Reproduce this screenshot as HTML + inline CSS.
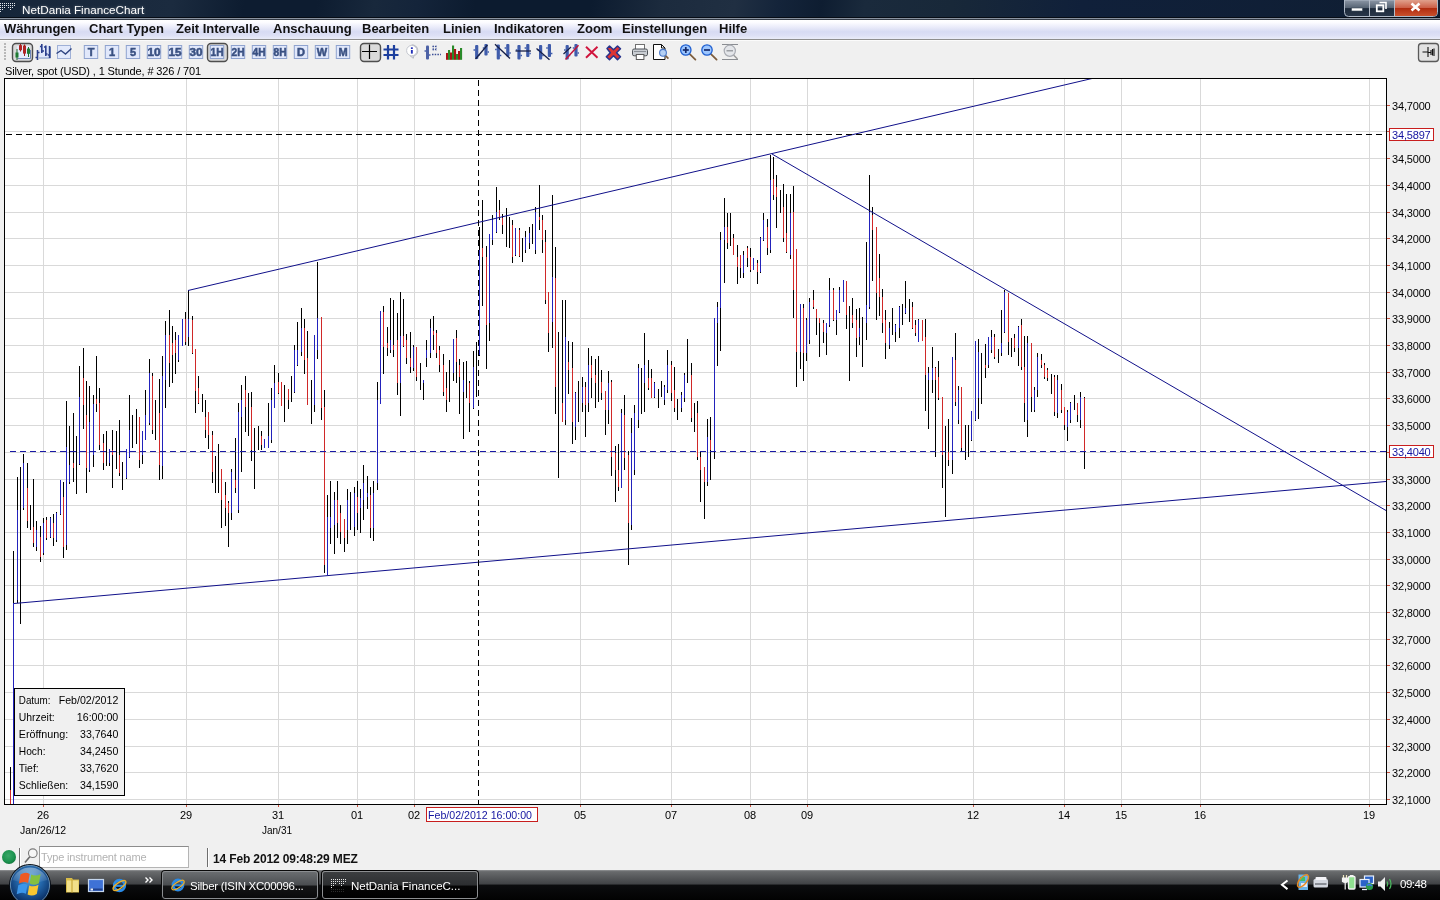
<!DOCTYPE html>
<html lang="de"><head><meta charset="utf-8"><title>NetDania FinanceChart</title>
<style>
html,body{margin:0;padding:0;}
body{will-change:transform;width:1440px;height:900px;overflow:hidden;position:relative;background:#f0f0f0;font-family:"Liberation Sans",Arial,sans-serif;font-size:11px;color:#000;}
.abs{position:absolute;}
#titlebar{left:0;top:0;width:1440px;height:17px;background:linear-gradient(100deg,#16263a 0%,#1b2b3f 12%,#0d1c30 17%,#0d1c30 22%,#18283c 26%,#14243a 29%,#0c1b2f 33%,#0c1b2f 41%,#1c2b3e 46%,#202f42 51%,#14243a 54%,#0e1d31 57%,#1a2a3c 60%,#182839 66%,#10203a 75%,#0f1e32 100%);}
#titlebar .t{position:absolute;left:22px;top:3px;color:#fff;font-size:11.7px;line-height:14px;letter-spacing:0;text-shadow:0 0 3px rgba(255,255,255,.35);}
#menubar{left:0;top:20px;width:1440px;height:19px;background:linear-gradient(180deg,#fff 0%,#fbfbff 14%,#e8eaf9 40%,#d7dbf3 62%,#dde0f5 82%,#eaecf9 100%);border-bottom:1px solid #8e8e8e;}
#menubar span{position:absolute;top:1px;font-weight:bold;font-size:13px;line-height:15px;color:#111;white-space:nowrap;}
#toolbar{left:0;top:40px;width:1440px;height:26px;background:#f0f0f0;border-top:1px solid #fbfbfb;box-sizing:border-box;}
#lbl{left:5px;top:65px;font-size:11px;line-height:13px;white-space:nowrap;letter-spacing:-0.14px;}
#status{left:0;top:845px;width:1440px;height:25px;background:#f0f0f0;}
#taskbar{left:0;top:870px;width:1440px;height:30px;background:linear-gradient(180deg,#97999b 0%,#6e7072 4%,#66686a 8%,#404245 47%,#0b0c0e 50%,#020202 100%);}
.tt{color:#fff;font-size:12px;line-height:14px;white-space:nowrap;}
</style></head><body>
<div id="titlebar" class="abs"><svg width="1440" height="20" viewBox="0 0 1440 20" style="position:absolute;left:0;top:0"><defs><linearGradient id="cbg" x1="0" y1="0" x2="0" y2="1"><stop offset="0" stop-color="#8c97a6"/><stop offset="0.48" stop-color="#566373"/><stop offset="0.52" stop-color="#1d2a3b"/><stop offset="1" stop-color="#2a3749"/></linearGradient><linearGradient id="cbr" x1="0" y1="0" x2="0" y2="1"><stop offset="0" stop-color="#e0a08c"/><stop offset="0.48" stop-color="#cc6048"/><stop offset="0.52" stop-color="#b02c10"/><stop offset="1" stop-color="#c8502c"/></linearGradient></defs><g fill="#e4e8ee"><rect x="0" y="3" width="1" height="1"/><rect x="2" y="3" width="1" height="1"/><rect x="4" y="3" width="1" height="1"/><rect x="6" y="3" width="1" height="1"/><rect x="8" y="3" width="1" height="1"/><rect x="10" y="3" width="1" height="1"/><rect x="12" y="3" width="1" height="1"/><rect x="14" y="3" width="1" height="1"/><rect x="0" y="5" width="1" height="1"/><rect x="2" y="5" width="1" height="1"/><rect x="4" y="5" width="1" height="1"/><rect x="6" y="5" width="1" height="1"/><rect x="8" y="5" width="1" height="1"/><rect x="10" y="5" width="1" height="1"/><rect x="12" y="5" width="1" height="1"/><rect x="14" y="5" width="1" height="1"/><rect x="0" y="7" width="1" height="1"/><rect x="2" y="7" width="1" height="1"/><rect x="4" y="7" width="1" height="1"/><rect x="8" y="7" width="1" height="1"/><rect x="10" y="7" width="1" height="1"/><rect x="12" y="7" width="1" height="1"/><rect x="0" y="9" width="1" height="1"/><rect x="2" y="9" width="1" height="1"/><rect x="10" y="9" width="1" height="1"/><rect x="0" y="11" width="1" height="1"/></g><path d="M1344.5 0V12.5Q1344.5 16.5 1348.5 16.5H1433.5Q1437.5 16.5 1437.5 12.5V0Z" fill="url(#cbg)" stroke="#aeb8c6" stroke-width="1"/><path d="M1395 0H1437V12.5Q1437 16 1433.5 16H1395Z" fill="url(#cbr)"/><path d="M1369.5 0V16M1394.5 0V16" stroke="#b4bcc8" stroke-width="1"/><rect x="1351.5" y="8" width="11" height="3" fill="#fff" stroke="#3a4656" stroke-width="0.6"/><path d="M1379.5 2.5H1386V9" fill="none" stroke="#fff" stroke-width="1.6"/><rect x="1376.8" y="5.3" width="6.5" height="6" fill="none" stroke="#fff" stroke-width="1.8"/><path d="M1411.5 3.5L1419.5 10.5M1419.5 3.5L1411.5 10.5" stroke="#fff" stroke-width="2.6"/></svg><span class="t">NetDania FinanceChart</span></div>
<div class="abs" style="left:0;top:17px;width:1440px;height:1px;background:#070d16"></div><div class="abs" style="left:0;top:18px;width:1440px;height:1px;background:#8a93a0"></div><div class="abs" style="left:0;top:19px;width:1440px;height:1px;background:#343c48"></div>
<div id="menubar" class="abs">
<span style="left:4px">Währungen</span><span style="left:89px">Chart Typen</span><span style="left:176px">Zeit Intervalle</span><span style="left:273px">Anschauung</span><span style="left:362px">Bearbeiten</span><span style="left:443px">Linien</span><span style="left:494px">Indikatoren</span><span style="left:577px">Zoom</span><span style="left:622px">Einstellungen</span><span style="left:719px">Hilfe</span>
</div>
<div id="toolbar" class="abs"></div>
<svg width="1440" height="26" viewBox="0 40 1440 26" style="position:absolute;left:0;top:40px" font-family="Liberation Sans, Arial, sans-serif"><rect x="4" y="43" width="2" height="2" fill="#b8b8b8"/><rect x="4" y="46" width="2" height="2" fill="#b8b8b8"/><rect x="4" y="49" width="2" height="2" fill="#b8b8b8"/><rect x="4" y="52" width="2" height="2" fill="#b8b8b8"/><rect x="4" y="55" width="2" height="2" fill="#b8b8b8"/><rect x="4" y="58" width="2" height="2" fill="#b8b8b8"/><rect x="12.5" y="43.5" width="20" height="18" rx="3.5" fill="#dadada" stroke="#4e4e4e" stroke-width="1.4"/><rect x="207.5" y="43.5" width="20" height="18" rx="3.5" fill="#dadada" stroke="#4e4e4e" stroke-width="1.4"/><rect x="360.5" y="43.5" width="20" height="18" rx="3.5" fill="#dadada" stroke="#4e4e4e" stroke-width="1.4"/><rect x="17" y="46" width="13" height="12" fill="#e4ebfb"/><path d="M17.5 58.5H30.5V50" fill="none" stroke="#6f86b8"/><g stroke-width="1"><path d="M17 49V60" stroke="#1d6b2c"/><path d="M20.5 44V51.5M24.5 44.5V56" stroke="#9c1c1c"/><path d="M28.5 47V57" stroke="#1d6b2c"/></g><rect x="15.5" y="52.5" width="3" height="5" fill="#1f7a33"/><rect x="19" y="45.2" width="3" height="5" fill="#b02424"/><rect x="23" y="45.6" width="3" height="8" fill="#b02424"/><rect x="27" y="48.6" width="3" height="5.2" fill="#1f7a33"/><rect x="39" y="45.5" width="11" height="12.5" fill="#dfe7fa"/><path d="M39 58H50.5V47" fill="none" stroke="#7f95c4"/><g stroke="#2b3f8c" stroke-width="1.6" fill="none"><path d="M37.5 50V60M35.5 57.5H37.5M37.5 52.5H39.5"/><path d="M41.8 44V53M40 46.5H41.8M41.8 51H44"/><path d="M45.8 45.5V56M44 47H45.8M45.8 54H47.5"/><path d="M49.6 46V58M47.8 55H49.6"/></g><rect x="57.5" y="45.5" width="13" height="13" fill="#e2e9fb" stroke="#9fb0d6"/><path d="M56.5 53.5L61 50.5L65.5 54L71.5 48.5" fill="none" stroke="#2f4480" stroke-width="1.4"/><rect x="84.3" y="45.5" width="13.4" height="13" fill="#e1e8fb" stroke="#8fa3cf" stroke-width="1"/><text x="91.0" y="56" text-anchor="middle" font-size="11" font-weight="bold" fill="#3a5182" stroke="#3a5182" stroke-width="0.5">T</text><rect x="105.3" y="45.5" width="13.4" height="13" fill="#e1e8fb" stroke="#8fa3cf" stroke-width="1"/><text x="112.0" y="56" text-anchor="middle" font-size="11" font-weight="bold" fill="#3a5182" stroke="#3a5182" stroke-width="0.5">1</text><rect x="126.3" y="45.5" width="13.4" height="13" fill="#e1e8fb" stroke="#8fa3cf" stroke-width="1"/><text x="133.0" y="56" text-anchor="middle" font-size="11" font-weight="bold" fill="#3a5182" stroke="#3a5182" stroke-width="0.5">5</text><rect x="147.3" y="45.5" width="13.4" height="13" fill="#e1e8fb" stroke="#8fa3cf" stroke-width="1"/><text x="154.0" y="56" text-anchor="middle" font-size="10.5" font-weight="bold" fill="#3a5182" stroke="#3a5182" stroke-width="0.5" textLength="13" lengthAdjust="spacingAndGlyphs">10</text><rect x="168.3" y="45.5" width="13.4" height="13" fill="#e1e8fb" stroke="#8fa3cf" stroke-width="1"/><text x="175.0" y="56" text-anchor="middle" font-size="10.5" font-weight="bold" fill="#3a5182" stroke="#3a5182" stroke-width="0.5" textLength="13" lengthAdjust="spacingAndGlyphs">15</text><rect x="189.3" y="45.5" width="13.4" height="13" fill="#e1e8fb" stroke="#8fa3cf" stroke-width="1"/><text x="196.0" y="56" text-anchor="middle" font-size="10.5" font-weight="bold" fill="#3a5182" stroke="#3a5182" stroke-width="0.5" textLength="13" lengthAdjust="spacingAndGlyphs">30</text><rect x="210.3" y="45.5" width="13.4" height="13" fill="#e1e8fb" stroke="#8fa3cf" stroke-width="1"/><text x="217.0" y="56" text-anchor="middle" font-size="10.5" font-weight="bold" fill="#3a5182" stroke="#3a5182" stroke-width="0.5" textLength="13" lengthAdjust="spacingAndGlyphs">1H</text><rect x="231.3" y="45.5" width="13.4" height="13" fill="#e1e8fb" stroke="#8fa3cf" stroke-width="1"/><text x="238.0" y="56" text-anchor="middle" font-size="10.5" font-weight="bold" fill="#3a5182" stroke="#3a5182" stroke-width="0.5" textLength="13" lengthAdjust="spacingAndGlyphs">2H</text><rect x="252.3" y="45.5" width="13.4" height="13" fill="#e1e8fb" stroke="#8fa3cf" stroke-width="1"/><text x="259.0" y="56" text-anchor="middle" font-size="10.5" font-weight="bold" fill="#3a5182" stroke="#3a5182" stroke-width="0.5" textLength="13" lengthAdjust="spacingAndGlyphs">4H</text><rect x="273.3" y="45.5" width="13.4" height="13" fill="#e1e8fb" stroke="#8fa3cf" stroke-width="1"/><text x="280.0" y="56" text-anchor="middle" font-size="10.5" font-weight="bold" fill="#3a5182" stroke="#3a5182" stroke-width="0.5" textLength="13" lengthAdjust="spacingAndGlyphs">8H</text><rect x="294.3" y="45.5" width="13.4" height="13" fill="#e1e8fb" stroke="#8fa3cf" stroke-width="1"/><text x="301.0" y="56" text-anchor="middle" font-size="11" font-weight="bold" fill="#3a5182" stroke="#3a5182" stroke-width="0.5">D</text><rect x="315.3" y="45.5" width="13.4" height="13" fill="#e1e8fb" stroke="#8fa3cf" stroke-width="1"/><text x="322.0" y="56" text-anchor="middle" font-size="11" font-weight="bold" fill="#3a5182" stroke="#3a5182" stroke-width="0.5">W</text><rect x="336.3" y="45.5" width="13.4" height="13" fill="#e1e8fb" stroke="#8fa3cf" stroke-width="1"/><text x="343.0" y="56" text-anchor="middle" font-size="11" font-weight="bold" fill="#3a5182" stroke="#3a5182" stroke-width="0.5">M</text><path d="M369.5 44.5V59M362 51.5H377" stroke="#000" stroke-width="1.2" fill="none"/><g stroke="#1c3f9e" stroke-width="2.2" fill="none"><path d="M388 45V59.5M394 45V59.5M383.5 49.5H398.5M383.5 55H398.5"/></g><path d="M411.8 45a5.6 5.6 0 1 1 -1.5 11l3 2.3l0.6-2.4a5.6 5.6 0 0 0 -2.1 -10.9z" fill="#fff" stroke="#b9bcc4" stroke-width="1"/><circle cx="411.8" cy="50.6" r="5.2" fill="#fff" stroke="#c4c7cf"/><rect x="410.9" y="47.3" width="1.9" height="1.7" fill="#2330b8"/><rect x="410.9" y="50" width="1.9" height="3.6" fill="#2330b8"/><rect x="426" y="45.5" width="3" height="14" rx="1" fill="#4d62a6"/><path d="M424.5 51H426M429 55H430.5" stroke="#4d62a6" stroke-width="1.4"/><path d="M432 54.5H441" stroke="#3c4f96" stroke-width="1.3" stroke-dasharray="1.5 1.2"/><path d="M432.5 46.5H437M432.5 49.5H437" stroke="#3c4f96" stroke-width="1.2" stroke-dasharray="1.4 1"/><path d="M433.2 45.5V50.5M436 45.5V50.5" stroke="#3c4f96" stroke-width="1" stroke-dasharray="1.2 1"/><rect x="446" y="53" width="2.1" height="6.8" fill="#a81414"/><rect x="448" y="50" width="2.1" height="9.8" fill="#2a8a2a"/><rect x="450" y="52.5" width="2.1" height="7.3" fill="#a81414"/><rect x="452" y="45.5" width="2.1" height="14.3" fill="#2a8a2a"/><rect x="454" y="49" width="2.1" height="10.8" fill="#a81414"/><rect x="456" y="54" width="2.1" height="5.8" fill="#2a8a2a"/><rect x="458" y="51" width="2.1" height="8.8" fill="#a81414"/><rect x="460" y="48" width="2.1" height="11.8" fill="#2a8a2a"/><rect x="475.09999999999997" y="45" width="3.2" height="14" rx="1" fill="#3f5cab"/><rect x="484.4" y="44" width="3.2" height="11.5" rx="1" fill="#3f5cab"/><path d="M473.5 50H475.09999999999997M478.3 55H479.7M482.8 48H484.4M487.6 52.0H489" stroke="#3f5cab" stroke-width="1.4"/><path d="M475.5 59L487.5 45" stroke="#16204a" stroke-width="1.3"/><rect x="496.7" y="44.5" width="3.2" height="15.0" rx="1" fill="#3f5cab"/><rect x="506.2" y="44" width="3.2" height="12.5" rx="1" fill="#3f5cab"/><path d="M495.1 49.5H496.7M499.90000000000003 55.5H501.3M504.6 48H506.2M509.40000000000003 53.0H510.8" stroke="#3f5cab" stroke-width="1.4"/><path d="M495 44.2L510 58.5" stroke="#16204a" stroke-width="1.3"/><rect x="517.4" y="45" width="3.2" height="14.5" rx="1" fill="#3f5cab"/><rect x="526.1999999999999" y="44" width="3.2" height="13" rx="1" fill="#3f5cab"/><path d="M515.8 50H517.4M520.6 55.5H522M524.5999999999999 48H526.1999999999999M529.4 53.5H530.8" stroke="#3f5cab" stroke-width="1.4"/><path d="M515.5 51H531" stroke="#16204a" stroke-width="1.3"/><rect x="539.0" y="45" width="3.2" height="14.5" rx="1" fill="#3f5cab"/><rect x="547.8" y="44" width="3.2" height="13" rx="1" fill="#3f5cab"/><path d="M537.4 50H539.0M542.2 55.5H543.6M546.1999999999999 48H547.8M551.0 53.5H552.4" stroke="#3f5cab" stroke-width="1.4"/><path d="M536.5 48.5L549.5 59.8" stroke="#16204a" stroke-width="1.3"/><rect x="565.6" y="45" width="3.2" height="14.5" rx="1" fill="#3f5cab"/><rect x="574.4" y="44" width="3.2" height="12.5" rx="1" fill="#3f5cab"/><path d="M564.0 50H565.6M568.8000000000001 55.5H570.2M572.8 48H574.4M577.6 53.0H579" stroke="#3f5cab" stroke-width="1.4"/><path d="M563.5 54L571 47" stroke="#16204a" stroke-width="1.2"/><path d="M565.5 59.5L578.5 45.3" stroke="#c0143c" stroke-width="1.5"/><path d="M586 46.8L597.5 57.8M597.5 46.8L586 57.8" stroke="#d0143c" stroke-width="1.9" fill="none"/><path d="M607 48.5L609.5 46L613.5 49.8L617.5 46L620.5 48.8L616.5 52.7L620.5 56.8L617.5 59.8L613.5 55.8L609.5 59.8L606.3 56.8L610.3 52.7Z" fill="#dc3434" stroke="#27348c" stroke-width="1.5" stroke-linejoin="round"/><rect x="635.5" y="44.5" width="9" height="5" fill="#fff" stroke="#707070"/><rect x="632.5" y="49" width="15" height="6.8" rx="1.6" fill="#c9cdd2" stroke="#4e5358"/><path d="M634 51.5H646" stroke="#8a8f96"/><rect x="636.3" y="54.5" width="7.6" height="5" fill="#fff" stroke="#5a5a5a"/><path d="M653.5 44.5H661.5L665 48V59.5H653.5Z" fill="#fff" stroke="#111" stroke-width="1"/><path d="M661.5 44.5V48H665" fill="none" stroke="#111"/><path d="M665.5 55.5L668.4 58.6" stroke="#7a5a3a" stroke-width="1.6"/><circle cx="663" cy="52.8" r="3.4" fill="#b4d0f4" stroke="#4a78c8" stroke-width="1.1"/><path d="M689.8 54.2L695.4 59.6" stroke="#7c5c3c" stroke-width="1.8" stroke-linecap="round"/><circle cx="685.8" cy="50" r="5.2" fill="#9cc6ff" stroke="#1f5fd0" stroke-width="1.3"/><path d="M682.8 50H688.8" stroke="#152a6a" stroke-width="1.7"/><path d="M685.8 47V53" stroke="#152a6a" stroke-width="1.7"/><path d="M711 54.2L716.6 59.6" stroke="#7c5c3c" stroke-width="1.8" stroke-linecap="round"/><circle cx="707" cy="50" r="5.2" fill="#9cc6ff" stroke="#1f5fd0" stroke-width="1.3"/><path d="M704 50H710" stroke="#152a6a" stroke-width="1.7"/><path d="M722 44.5H738M722 59.5H738" stroke="#8a8d92" stroke-width="1.2"/><path d="M733.5 55L737.5 59" stroke="#9a9a9a" stroke-width="1.5"/><circle cx="729.8" cy="50.8" r="5.6" fill="#e4e6ea" stroke="#a8abb2" stroke-width="1.2"/><path d="M726.5 50.8H733" stroke="#8a8d92" stroke-width="1.2"/><rect x="1418.5" y="43.5" width="20" height="18" rx="3" fill="#e2e2e2" stroke="#5a5a5a" stroke-width="1.3"/><path d="M1422.5 52H1428M1428 47V57M1428.5 52.5H1431M1431 50V55M1432.5 49V55.5M1434 48.5V56" stroke="#111" stroke-width="1.1" fill="none"/></svg>
<div id="lbl" class="abs">Silver, spot (USD) , 1 Stunde, # 326 / 701</div>
<svg id="chart" width="1440" height="780" viewBox="0 66 1440 780" style="position:absolute;left:0;top:66px" font-family="Liberation Sans, Arial, sans-serif" font-size="11">
<rect x="5" y="78" width="1381" height="726" fill="#fff"/>
<g stroke="#d9d9d9" stroke-width="1" shape-rendering="crispEdges"><line x1="5" x2="1386" y1="105.5" y2="105.5"/><line x1="5" x2="1386" y1="131.5" y2="131.5"/><line x1="5" x2="1386" y1="158.5" y2="158.5"/><line x1="5" x2="1386" y1="185.5" y2="185.5"/><line x1="5" x2="1386" y1="212.5" y2="212.5"/><line x1="5" x2="1386" y1="238.5" y2="238.5"/><line x1="5" x2="1386" y1="265.5" y2="265.5"/><line x1="5" x2="1386" y1="292.5" y2="292.5"/><line x1="5" x2="1386" y1="318.5" y2="318.5"/><line x1="5" x2="1386" y1="345.5" y2="345.5"/><line x1="5" x2="1386" y1="372.5" y2="372.5"/><line x1="5" x2="1386" y1="398.5" y2="398.5"/><line x1="5" x2="1386" y1="425.5" y2="425.5"/><line x1="5" x2="1386" y1="452.5" y2="452.5"/><line x1="5" x2="1386" y1="479.5" y2="479.5"/><line x1="5" x2="1386" y1="505.5" y2="505.5"/><line x1="5" x2="1386" y1="532.5" y2="532.5"/><line x1="5" x2="1386" y1="559.5" y2="559.5"/><line x1="5" x2="1386" y1="585.5" y2="585.5"/><line x1="5" x2="1386" y1="612.5" y2="612.5"/><line x1="5" x2="1386" y1="639.5" y2="639.5"/><line x1="5" x2="1386" y1="665.5" y2="665.5"/><line x1="5" x2="1386" y1="692.5" y2="692.5"/><line x1="5" x2="1386" y1="719.5" y2="719.5"/><line x1="5" x2="1386" y1="746.5" y2="746.5"/><line x1="5" x2="1386" y1="772.5" y2="772.5"/><line x1="5" x2="1386" y1="799.5" y2="799.5"/><line x1="43.5" x2="43.5" y1="78" y2="804"/><line x1="186.5" x2="186.5" y1="78" y2="804"/><line x1="278.5" x2="278.5" y1="78" y2="804"/><line x1="357.5" x2="357.5" y1="78" y2="804"/><line x1="414.5" x2="414.5" y1="78" y2="804"/><line x1="580.5" x2="580.5" y1="78" y2="804"/><line x1="671.5" x2="671.5" y1="78" y2="804"/><line x1="750.5" x2="750.5" y1="78" y2="804"/><line x1="807.5" x2="807.5" y1="78" y2="804"/><line x1="973.5" x2="973.5" y1="78" y2="804"/><line x1="1064.5" x2="1064.5" y1="78" y2="804"/><line x1="1121.5" x2="1121.5" y1="78" y2="804"/><line x1="1200.5" x2="1200.5" y1="78" y2="804"/><line x1="1369.5" x2="1369.5" y1="78" y2="804"/></g>
<g fill="none" stroke-width="1" shape-rendering="crispEdges"><path stroke="#000" d="M10.5 767V804M13.5 551V804M17.5 477V603M20.5 467V624M23.5 454V510M27.5 463V528M30.5 505V530M33.5 479V547M36.5 521V551M40.5 526V562M43.5 518V555M46.5 517V540M50.5 517V538M53.5 514V546M56.5 512V542M60.5 480V515M63.5 482V558M66.5 401V550M69.5 426V484M73.5 413V482M76.5 436V494M79.5 366V465M83.5 348V429M86.5 381V493M89.5 386V472M93.5 395V467M96.5 356V412M99.5 388V450M103.5 434V470M106.5 431V466M109.5 449V466M112.5 430V488M116.5 431V469M119.5 420V476M122.5 462V490M126.5 449V479M129.5 395V458M132.5 415V448M136.5 409V444M139.5 417V468M142.5 431V464M145.5 390V440M149.5 359V425M152.5 373V434M155.5 400V440M159.5 379V480M162.5 356V479M165.5 321V408M169.5 310V387M172.5 326V383M175.5 332V374M178.5 335V362M182.5 319V346M185.5 312V345M188.5 290V346M192.5 316V354M195.5 349V413M198.5 376V404M202.5 394V412M205.5 400V438M208.5 412V449M212.5 431V483M215.5 456V493M218.5 444V493M221.5 469V528M225.5 482V526M228.5 501V547M231.5 469V520M235.5 438V493M238.5 403V513M241.5 385V472M245.5 376V432M248.5 393V436M251.5 392V461M254.5 428V489M258.5 426V450M261.5 431V450M264.5 439V448M268.5 403V448M271.5 388V443M274.5 365V408M278.5 373V394M281.5 382V406M284.5 385V422M288.5 389V409M291.5 376V402M294.5 345V393M297.5 322V366M301.5 308V356M304.5 319V374M307.5 331V405M311.5 380V424M314.5 335V412M317.5 262V359M321.5 317V420M324.5 390V573M327.5 495V575M330.5 481V544M334.5 492V554M337.5 481V538M340.5 505V544M344.5 519V552M347.5 489V544M350.5 492V530M354.5 487V536M357.5 481V530M360.5 489V533M363.5 465V520M367.5 476V509M370.5 487V538M373.5 481V541M377.5 382V490M380.5 311V404M383.5 306V374M387.5 327V356M390.5 298V353M393.5 300V357M397.5 313V395M400.5 292V416M403.5 299V347M406.5 334V364M410.5 332V373M413.5 345V371M416.5 347V381M420.5 363V390M423.5 380V400M426.5 340V367M430.5 319V358M433.5 316V350M436.5 330V358M439.5 346V372M443.5 354V396M446.5 372V412M449.5 360V402M453.5 339V381M456.5 330V383M459.5 359V414M463.5 362V439M466.5 361V398M469.5 381V432M473.5 351V409M476.5 342V397M479.5 227V356M482.5 200V306M486.5 246V369M489.5 234V341M492.5 215V245M496.5 187V233M499.5 200V220M502.5 214V234M506.5 208V247M509.5 217V248M512.5 220V263M515.5 228V256M519.5 228V257M522.5 238V262M525.5 231V253M529.5 227V249M532.5 224V244M535.5 207V254M539.5 185V230M542.5 215V253M545.5 230V304M548.5 292V352M552.5 195V348M555.5 247V414M558.5 332V478M562.5 300V422M565.5 300V425M568.5 341V394M572.5 342V444M575.5 392V440M578.5 381V422M582.5 377V412M585.5 382V437M588.5 348V412M591.5 356V398M595.5 359V408M598.5 356V402M601.5 370V400M605.5 391V435M608.5 371V424M611.5 380V476M615.5 446V502M618.5 444V491M621.5 409V488M624.5 395V470M628.5 451V565M631.5 418V530M634.5 405V475M638.5 364V428M641.5 368V414M644.5 333V412M648.5 360V390M651.5 369V398M654.5 382V398M658.5 389V408M661.5 381V397M664.5 385V405M667.5 350V393M671.5 361V401M674.5 367V412M677.5 399V420M681.5 392V412M684.5 373V402M687.5 339V383M691.5 363V422M694.5 403V432M697.5 401V460M700.5 452V502M704.5 467V519M707.5 419V486M710.5 417V480M714.5 318V459M717.5 302V366M720.5 232V351M724.5 198V283M727.5 213V249M730.5 213V246M733.5 234V255M737.5 245V284M740.5 255V278M743.5 251V278M747.5 246V267M750.5 248V272M753.5 258V270M757.5 260V284M760.5 237V273M763.5 213V241M767.5 219V255M770.5 155V253M773.5 157V200M776.5 175V228M780.5 190V213M783.5 184V242M786.5 194V253M790.5 194V259M793.5 186V318M796.5 249V387M800.5 304V369M803.5 304V381M806.5 318V361M809.5 298V344M813.5 290V309M816.5 309V335M819.5 318V357M823.5 320V343M826.5 323V355M829.5 278V327M833.5 288V321M836.5 310V335M839.5 287V313M843.5 280V302M846.5 281V329M849.5 306V381M852.5 298V328M856.5 309V357M859.5 308V345M862.5 317V367M866.5 242V340M869.5 175V309M872.5 207V281M876.5 227V320M879.5 254V316M882.5 289V333M885.5 310V359M889.5 322V349M892.5 308V335M895.5 324V342M899.5 306V338M902.5 304V325M905.5 281V314M909.5 299V322M912.5 302V329M915.5 320V336M918.5 319V342M922.5 320V341M925.5 319V411M928.5 367V429M932.5 347V393M935.5 367V457M938.5 361V400M942.5 397V488M945.5 426V517M948.5 419V466M952.5 357V474M955.5 333V406M958.5 386V424M961.5 387V451M965.5 425V460M968.5 425V457M971.5 411V441M975.5 341V421M978.5 339V419M981.5 353V404M985.5 344V378M988.5 337V368M991.5 330V353M994.5 334V359M998.5 349V363M1001.5 310V356M1004.5 290V333M1008.5 293V355M1011.5 338V357M1014.5 334V352M1018.5 326V366M1021.5 319V370M1024.5 336V422M1027.5 336V437M1031.5 343V412M1034.5 387V412M1037.5 353V397M1041.5 354V368M1044.5 363V379M1047.5 368V381M1051.5 374V394M1054.5 375V416M1057.5 375V418M1061.5 384V413M1064.5 407V430M1067.5 410V441M1070.5 402V423M1074.5 395V410M1077.5 403V422M1080.5 392V428M1084.5 397V469"/><path stroke="#2222bb" d="M13.5 603V804M17.5 510V600M23.5 463V508M36.5 530V547M43.5 523V553M50.5 518V537M56.5 513V540M60.5 480V514M66.5 447V545M69.5 465V482M79.5 397V464M89.5 422V470M93.5 404V455M109.5 449V463M126.5 449V478M129.5 430V457M142.5 431V455M145.5 415V440M149.5 373V423M162.5 376V466M165.5 335V380M178.5 335V360M182.5 319V346M188.5 319V337M231.5 472V513M238.5 412V510M241.5 400V417M264.5 439V448M268.5 436V448M271.5 400V440M274.5 383V408M294.5 350V392M297.5 350V365M301.5 328V352M314.5 335V405M317.5 318V350M327.5 517V575M330.5 517V528M334.5 500V525M347.5 500V530M354.5 493V527M360.5 498V508M363.5 483V500M367.5 493V497M373.5 493V528M377.5 400V483M380.5 311V404M390.5 340V350M400.5 336V383M413.5 347V368M423.5 380V383M426.5 350V358M430.5 328V353M453.5 339V373M463.5 380V392M473.5 367V408M479.5 250V355M489.5 234V323M492.5 220V240M496.5 212V232M515.5 228V255M525.5 237V250M529.5 233V243M535.5 212V250M552.5 277V322M565.5 337V420M575.5 393V427M582.5 387V403M588.5 365V403M608.5 383V410M621.5 413V488M631.5 433V525M634.5 413V470M638.5 368V420M644.5 365V383M654.5 383V397M664.5 387V400M667.5 365V390M681.5 395V408M684.5 375V398M707.5 437V482M714.5 318V452M717.5 307V323M720.5 240V308M724.5 227V240M743.5 255V273M753.5 258V270M760.5 238V272M763.5 220V240M770.5 180V250M790.5 213V255M800.5 304V352M806.5 320V353M809.5 302V340M826.5 323V333M829.5 290V325M836.5 310V320M839.5 290V312M843.5 280V302M859.5 328V337M866.5 305V323M869.5 212V307M889.5 328V345M895.5 325V332M899.5 307V328M905.5 308V313M918.5 320V342M928.5 373V380M932.5 368V380M952.5 357V460M958.5 390V420M971.5 411V440M975.5 341V420M978.5 352V398M988.5 337V365M991.5 337V350M1001.5 343V353M1004.5 292V332M1018.5 327V348M1027.5 343V420M1034.5 390V410M1037.5 357V390M1057.5 380V413M1067.5 412V427M1070.5 403V420M1080.5 397V420"/><path stroke="#d02828" d="M10.5 790V804M27.5 488V521M33.5 527V543M40.5 537V557M46.5 520V538M53.5 523V538M63.5 497V547M73.5 463V468M83.5 378V405M86.5 415V468M96.5 399V404M99.5 403V445M103.5 443V463M112.5 450V455M119.5 455V473M139.5 417V460M152.5 376V430M159.5 413V465M169.5 335V363M172.5 343V355M175.5 340V353M185.5 319V342M192.5 320V353M195.5 349V391M198.5 388V403M205.5 417V430M208.5 412V435M212.5 435V472M221.5 469V500M225.5 495V508M228.5 503V513M235.5 480V488M245.5 390V407M251.5 407V450M261.5 436V445M278.5 382V393M281.5 382V406M288.5 389V400M304.5 328V360M307.5 358V405M321.5 317V408M324.5 407V565M337.5 500V523M340.5 513V532M344.5 519V538M357.5 497V513M370.5 495V528M383.5 312V347M387.5 343V348M393.5 345V350M397.5 340V383M403.5 336V346M406.5 340V358M410.5 358V367M416.5 347V377M433.5 331V335M436.5 333V353M439.5 350V365M443.5 365V392M446.5 388V400M456.5 338V362M459.5 365V377M469.5 383V403M482.5 248V257M486.5 257V325M499.5 210V218M502.5 218V225M512.5 225V257M519.5 230V256M539.5 217V220M542.5 220V240M545.5 242V300M548.5 292V333M555.5 278V387M562.5 403V422M568.5 362V370M572.5 368V422M585.5 387V405M591.5 365V378M595.5 375V383M601.5 382V393M605.5 391V410M611.5 382V457M615.5 453V470M618.5 470V487M624.5 415V458M628.5 455V523M648.5 378V388M651.5 378V398M671.5 365V393M674.5 390V408M691.5 375V418M697.5 413V457M700.5 457V470M704.5 467V482M710.5 440V450M727.5 227V243M733.5 238V255M737.5 257V267M740.5 255V268M747.5 248V258M750.5 257V270M757.5 263V272M767.5 227V248M773.5 179V195M776.5 187V197M783.5 207V238M786.5 233V252M793.5 212V290M796.5 249V352M803.5 308V353M813.5 300V307M816.5 309V318M819.5 318V323M823.5 323V332M833.5 290V320M846.5 281V315M852.5 315V323M856.5 320V338M872.5 215V230M876.5 227V293M879.5 278V297M882.5 297V323M885.5 320V343M912.5 307V328M915.5 325V333M922.5 320V341M925.5 337V375M935.5 368V380M938.5 377V398M942.5 397V455M948.5 452V460M955.5 360V402M961.5 387V448M985.5 365V368M994.5 337V357M1008.5 293V342M1014.5 338V348M1021.5 325V367M1024.5 367V403M1031.5 343V397M1041.5 360V365M1044.5 365V377M1047.5 370V378M1054.5 377V412M1061.5 390V410M1064.5 407V425M1077.5 403V415M1084.5 398V452"/></g>
<g stroke="#10108a" stroke-width="1" fill="none"><line x1="188" y1="290.5" x2="1092" y2="78.5"/><line x1="772" y1="154" x2="1386" y2="510.5"/><line x1="14" y1="603.5" x2="1386" y2="481.5"/></g>
<g shape-rendering="crispEdges" stroke-width="1" fill="none"><line x1="10" x2="1386" y1="451.5" y2="451.5" stroke="#1818a4" stroke-dasharray="6 4"/><line x1="6" x2="1386" y1="134.5" y2="134.5" stroke="#000" stroke-dasharray="6 4"/><line x1="478.5" x2="478.5" y1="80" y2="804" stroke="#000" stroke-dasharray="6 4"/></g>
<rect x="4.5" y="78.5" width="1382" height="726" fill="none" stroke="#000" stroke-width="1" shape-rendering="crispEdges"/>
<g shape-rendering="crispEdges" stroke="#c8503c"><line x1="1387" x2="1390" y1="105.5" y2="105.5"/><line x1="1387" x2="1390" y1="131.5" y2="131.5"/><line x1="1387" x2="1390" y1="158.5" y2="158.5"/><line x1="1387" x2="1390" y1="185.5" y2="185.5"/><line x1="1387" x2="1390" y1="212.5" y2="212.5"/><line x1="1387" x2="1390" y1="238.5" y2="238.5"/><line x1="1387" x2="1390" y1="265.5" y2="265.5"/><line x1="1387" x2="1390" y1="292.5" y2="292.5"/><line x1="1387" x2="1390" y1="318.5" y2="318.5"/><line x1="1387" x2="1390" y1="345.5" y2="345.5"/><line x1="1387" x2="1390" y1="372.5" y2="372.5"/><line x1="1387" x2="1390" y1="398.5" y2="398.5"/><line x1="1387" x2="1390" y1="425.5" y2="425.5"/><line x1="1387" x2="1390" y1="452.5" y2="452.5"/><line x1="1387" x2="1390" y1="479.5" y2="479.5"/><line x1="1387" x2="1390" y1="505.5" y2="505.5"/><line x1="1387" x2="1390" y1="532.5" y2="532.5"/><line x1="1387" x2="1390" y1="559.5" y2="559.5"/><line x1="1387" x2="1390" y1="585.5" y2="585.5"/><line x1="1387" x2="1390" y1="612.5" y2="612.5"/><line x1="1387" x2="1390" y1="639.5" y2="639.5"/><line x1="1387" x2="1390" y1="665.5" y2="665.5"/><line x1="1387" x2="1390" y1="692.5" y2="692.5"/><line x1="1387" x2="1390" y1="719.5" y2="719.5"/><line x1="1387" x2="1390" y1="746.5" y2="746.5"/><line x1="1387" x2="1390" y1="772.5" y2="772.5"/><line x1="1387" x2="1390" y1="799.5" y2="799.5"/><line x1="43.5" x2="43.5" y1="805" y2="807"/><line x1="186.5" x2="186.5" y1="805" y2="807"/><line x1="278.5" x2="278.5" y1="805" y2="807"/><line x1="357.5" x2="357.5" y1="805" y2="807"/><line x1="414.5" x2="414.5" y1="805" y2="807"/><line x1="580.5" x2="580.5" y1="805" y2="807"/><line x1="671.5" x2="671.5" y1="805" y2="807"/><line x1="750.5" x2="750.5" y1="805" y2="807"/><line x1="807.5" x2="807.5" y1="805" y2="807"/><line x1="973.5" x2="973.5" y1="805" y2="807"/><line x1="1064.5" x2="1064.5" y1="805" y2="807"/><line x1="1121.5" x2="1121.5" y1="805" y2="807"/><line x1="1200.5" x2="1200.5" y1="805" y2="807"/><line x1="1369.5" x2="1369.5" y1="805" y2="807"/></g>
<g fill="#000"><text x="1392" y="109.5" letter-spacing="-0.18">34,7000</text><text x="1392" y="135.5" letter-spacing="-0.18">34,6000</text><text x="1392" y="162.5" letter-spacing="-0.18">34,5000</text><text x="1392" y="189.5" letter-spacing="-0.18">34,4000</text><text x="1392" y="216.5" letter-spacing="-0.18">34,3000</text><text x="1392" y="242.5" letter-spacing="-0.18">34,2000</text><text x="1392" y="269.5" letter-spacing="-0.18">34,1000</text><text x="1392" y="296.5" letter-spacing="-0.18">34,0000</text><text x="1392" y="322.5" letter-spacing="-0.18">33,9000</text><text x="1392" y="349.5" letter-spacing="-0.18">33,8000</text><text x="1392" y="376.5" letter-spacing="-0.18">33,7000</text><text x="1392" y="402.5" letter-spacing="-0.18">33,6000</text><text x="1392" y="429.5" letter-spacing="-0.18">33,5000</text><text x="1392" y="456.5" letter-spacing="-0.18">33,4000</text><text x="1392" y="483.5" letter-spacing="-0.18">33,3000</text><text x="1392" y="509.5" letter-spacing="-0.18">33,2000</text><text x="1392" y="536.5" letter-spacing="-0.18">33,1000</text><text x="1392" y="563.5" letter-spacing="-0.18">33,0000</text><text x="1392" y="589.5" letter-spacing="-0.18">32,9000</text><text x="1392" y="616.5" letter-spacing="-0.18">32,8000</text><text x="1392" y="643.5" letter-spacing="-0.18">32,7000</text><text x="1392" y="669.5" letter-spacing="-0.18">32,6000</text><text x="1392" y="696.5" letter-spacing="-0.18">32,5000</text><text x="1392" y="723.5" letter-spacing="-0.18">32,4000</text><text x="1392" y="750.5" letter-spacing="-0.18">32,3000</text><text x="1392" y="776.5" letter-spacing="-0.18">32,2000</text><text x="1392" y="803.5" letter-spacing="-0.18">32,1000</text><text x="43" y="819" text-anchor="middle">26</text><text x="186" y="819" text-anchor="middle">29</text><text x="278" y="819" text-anchor="middle">31</text><text x="357" y="819" text-anchor="middle">01</text><text x="414" y="819" text-anchor="middle">02</text><text x="580" y="819" text-anchor="middle">05</text><text x="671" y="819" text-anchor="middle">07</text><text x="750" y="819" text-anchor="middle">08</text><text x="807" y="819" text-anchor="middle">09</text><text x="973" y="819" text-anchor="middle">12</text><text x="1064" y="819" text-anchor="middle">14</text><text x="1121" y="819" text-anchor="middle">15</text><text x="1200" y="819" text-anchor="middle">16</text><text x="1369" y="819" text-anchor="middle">19</text><text x="20" y="834" textLength="46.2" lengthAdjust="spacingAndGlyphs">Jan/26/12</text><text x="262" y="834" textLength="30" lengthAdjust="spacingAndGlyphs">Jan/31</text></g>
<g shape-rendering="crispEdges"><rect x="1389.5" y="128.5" width="44" height="12" fill="#fff" stroke="#c81e1e"/><rect x="1389.5" y="445.5" width="44" height="12" fill="#fff" stroke="#c81e1e"/><rect x="426.5" y="807.5" width="111" height="14" fill="#fff" stroke="#c81e1e"/></g>
<g fill="#1414a0"><text x="1392" y="139" letter-spacing="-0.18">34,5897</text><text x="1392" y="456" letter-spacing="-0.18">33,4040</text><text x="428" y="819" textLength="104" lengthAdjust="spacingAndGlyphs">Feb/02/2012 16:00:00</text></g>
<rect x="14.5" y="688.5" width="110" height="107" fill="#f0f0f0" stroke="#000" shape-rendering="crispEdges"/>
<g fill="#000"><text x="18.8" y="704" textLength="31.7" lengthAdjust="spacingAndGlyphs">Datum:</text><text x="58.7" y="704" textLength="59.6" lengthAdjust="spacingAndGlyphs">Feb/02/2012</text><text x="18.8" y="721" textLength="35.9" lengthAdjust="spacingAndGlyphs">Uhrzeit:</text><text x="76.8" y="721" textLength="41.5" lengthAdjust="spacingAndGlyphs">16:00:00</text><text x="18.8" y="738" textLength="49.5" lengthAdjust="spacingAndGlyphs">Eröffnung:</text><text x="80.0" y="738" textLength="38.3" lengthAdjust="spacingAndGlyphs">33,7640</text><text x="18.8" y="755" textLength="26.7" lengthAdjust="spacingAndGlyphs">Hoch:</text><text x="80.0" y="755" textLength="38.3" lengthAdjust="spacingAndGlyphs">34,2450</text><text x="18.8" y="772" textLength="19.9" lengthAdjust="spacingAndGlyphs">Tief:</text><text x="80.0" y="772" textLength="38.3" lengthAdjust="spacingAndGlyphs">33,7620</text><text x="18.8" y="789" textLength="49.4" lengthAdjust="spacingAndGlyphs">Schließen:</text><text x="80.0" y="789" textLength="38.3" lengthAdjust="spacingAndGlyphs">34,1590</text></g>
</svg><div id="status" class="abs">
<svg width="220" height="25" viewBox="0 845 220 25" style="position:absolute;left:0;top:0">
<defs><radialGradient id="gdot" cx="0.45" cy="0.4" r="0.6"><stop offset="0" stop-color="#3aa868"/><stop offset="0.7" stop-color="#1d9450"/><stop offset="1" stop-color="#127a3e"/></radialGradient></defs>
<circle cx="9" cy="857" r="7" fill="url(#gdot)"/>
<path d="M19.5 848V867" stroke="#6e6e6e"/><path d="M20.5 848V867" stroke="#fff"/>
<path d="M30 856.5L25 862.5" stroke="#6a6a6a" stroke-width="1.6"/><circle cx="32.8" cy="853.2" r="4.3" fill="#f6f6f6" stroke="#7a7a7a" stroke-width="1.1"/>
<path d="M24 864.5H34" stroke="#c4c4c4" stroke-dasharray="1 1"/>
<path d="M207.5 848V867" stroke="#6e6e6e"/><path d="M208.5 848V867" stroke="#fff"/>
</svg>
<div class="abs" style="left:39px;top:1px;width:148px;height:20px;background:#fff;border:1px solid #b4b4b4;border-top-color:#8c8c8c;border-left-color:#9c9c9c"></div>
<span class="abs" style="left:41px;top:5px;font-size:11px;line-height:14px;color:#b2b2b2;white-space:nowrap;letter-spacing:-0.17px">Type instrument name</span>
<span class="abs" style="left:213px;top:7px;font-size:12px;line-height:14px;font-weight:bold;color:#111;white-space:nowrap;letter-spacing:-0.14px">14 Feb 2012 09:48:29 MEZ</span>
</div>
<div id="taskbar" class="abs">
<div class="abs tb" style="left:162px;top:1px;width:154px;height:26px;background:linear-gradient(180deg,#6a6d70 0%,#4a4d50 50%,#141516 54%,#0a0a0b 100%);border:1px solid #8a8d90;border-radius:3px;box-shadow:0 0 0 1px #0a0a0a"></div>
<div class="abs tb" style="left:322px;top:1px;width:154px;height:26px;background:linear-gradient(180deg,#3c3e40 0%,#2c2e30 50%,#060606 54%,#000 100%);border:1px solid #8c8e90;border-radius:3px;box-shadow:0 0 0 1px #000"></div>
<span class="abs tt" style="left:190px;top:9px;font-size:11.5px;letter-spacing:-0.26px">Silber (ISIN XC00096...</span>
<span class="abs tt" style="left:351px;top:9px;font-size:11.5px;letter-spacing:-0.03px">NetDania FinanceC...</span>
<span class="abs tt" style="left:1400px;top:7px;font-size:11.5px;letter-spacing:-0.5px">09:48</span>
</div>
<svg width="1440" height="40" viewBox="0 860 1440 40" style="position:absolute;left:0;top:860px"><defs><radialGradient id="orb" cx="0.5" cy="0.35" r="0.75"><stop offset="0" stop-color="#5aa4dc"/><stop offset="0.4" stop-color="#2468ac"/><stop offset="0.75" stop-color="#0e3870"/><stop offset="1" stop-color="#081c3c"/></radialGradient><linearGradient id="orbhl" x1="0" y1="0" x2="0" y2="1"><stop offset="0" stop-color="#fff" stop-opacity="0.4"/><stop offset="1" stop-color="#fff" stop-opacity="0.05"/></linearGradient></defs><circle cx="30" cy="885" r="21" fill="#050b14"/><circle cx="30" cy="885" r="19.6" fill="url(#orb)" stroke="#6f98bc" stroke-width="0.9"/><path d="M12.5 880a18.5 18.5 0 0 1 35 0q-17.5 6 -35 0z" fill="url(#orbhl)"/><path d="M20.5 874.5q4.8-3 9.2-0.6l-1.6 9q-4.4-2.2-9.2 0.6z" fill="#ee5a24"/><path d="M31.2 874.6q4.4 2.2 9.4-0.6l-1.7 9.2q-5 2.8-9.3 0.4z" fill="#84c040"/><path d="M18.3 885.3q4.8-2.8 9.2-0.6l-1.6 9q-4.4-2.2-9.2 0.6z" fill="#3a96ea"/><path d="M29.2 885.4q4.3 2.2 9.3-0.6l-1.7 9.2q-5 2.8-9.2 0.4z" fill="#f8c630"/><path d="M66 878h6l1 1.5h6v13h-13z" fill="#d8bc48"/><path d="M67 880.5h11.5v11.5h-11.5z" fill="#f2e08a"/><path d="M72 879v13.5" stroke="#c8a838" stroke-width="1.2"/><rect x="88.5" y="879.5" width="15" height="12" fill="#3f72d6" stroke="#c4d6ee" stroke-width="1.2"/><path d="M89.5 889.5h13" stroke="#20408c" stroke-width="2"/><rect x="90.5" y="888.5" width="2.5" height="2" fill="#e8eef8"/><circle cx="119.5" cy="885.5" r="5.2" fill="none" stroke="#2a8ae6" stroke-width="2.9"/><path d="M114.82 885.8h9.879999999999999" stroke="#2a8ae6" stroke-width="2.2"/><rect x="120.8" y="887.3" width="5.7" height="2.6" fill="#000" opacity="0"/><ellipse cx="119.5" cy="885.5" rx="7.5" ry="2.9" transform="rotate(-35 119.5 885.5)" fill="none" stroke="#e8b030" stroke-width="1.3"/><circle cx="178" cy="885" r="5" fill="none" stroke="#2a8ae6" stroke-width="2.8"/><path d="M173.5 885.3h9.5" stroke="#2a8ae6" stroke-width="2.1"/><rect x="179.2" y="886.8" width="5.5" height="2.5" fill="#000" opacity="0"/><ellipse cx="178" cy="885" rx="7.2" ry="2.8" transform="rotate(-35 178 885)" fill="none" stroke="#e8b030" stroke-width="1.3"/><path d="M145.5 877.5l2.5 2.5l-2.5 2.5M149.5 877.5l2.5 2.5l-2.5 2.5" fill="none" stroke="#fff" stroke-width="1.4"/><rect x="331" y="879" width="1" height="1" fill="#e6e6e6"/><rect x="333" y="879" width="1" height="1" fill="#e6e6e6"/><rect x="335" y="879" width="1" height="1" fill="#e6e6e6"/><rect x="337" y="879" width="1" height="1" fill="#e6e6e6"/><rect x="339" y="879" width="1" height="1" fill="#e6e6e6"/><rect x="341" y="879" width="1" height="1" fill="#e6e6e6"/><rect x="343" y="879" width="1" height="1" fill="#e6e6e6"/><rect x="345" y="879" width="1" height="1" fill="#e6e6e6"/><rect x="331" y="881" width="1" height="1" fill="#e6e6e6"/><rect x="333" y="881" width="1" height="1" fill="#e6e6e6"/><rect x="335" y="881" width="1" height="1" fill="#e6e6e6"/><rect x="337" y="881" width="1" height="1" fill="#e6e6e6"/><rect x="339" y="881" width="1" height="1" fill="#e6e6e6"/><rect x="341" y="881" width="1" height="1" fill="#e6e6e6"/><rect x="343" y="881" width="1" height="1" fill="#e6e6e6"/><rect x="345" y="881" width="1" height="1" fill="#e6e6e6"/><rect x="331" y="883" width="1" height="1" fill="#e6e6e6"/><rect x="333" y="883" width="1" height="1" fill="#e6e6e6"/><rect x="335" y="883" width="1" height="1" fill="#e6e6e6"/><rect x="339" y="883" width="1" height="1" fill="#e6e6e6"/><rect x="341" y="883" width="1" height="1" fill="#e6e6e6"/><rect x="343" y="883" width="1" height="1" fill="#e6e6e6"/><rect x="331" y="885" width="1" height="1" fill="#e6e6e6"/><rect x="333" y="885" width="1" height="1" fill="#e6e6e6"/><rect x="341" y="885" width="1" height="1" fill="#e6e6e6"/><rect x="331" y="887" width="1" height="1" fill="#e6e6e6"/><rect x="331" y="889" width="1" height="1" fill="#2c2c2c"/><rect x="333" y="889" width="1" height="1" fill="#2c2c2c"/><rect x="335" y="889" width="1" height="1" fill="#2c2c2c"/><rect x="337" y="889" width="1" height="1" fill="#2c2c2c"/><rect x="339" y="889" width="1" height="1" fill="#2c2c2c"/><rect x="341" y="889" width="1" height="1" fill="#2c2c2c"/><rect x="343" y="889" width="1" height="1" fill="#2c2c2c"/><rect x="331" y="891" width="1" height="1" fill="#2c2c2c"/><rect x="333" y="891" width="1" height="1" fill="#2c2c2c"/><rect x="335" y="891" width="1" height="1" fill="#2c2c2c"/><rect x="337" y="891" width="1" height="1" fill="#2c2c2c"/><rect x="339" y="891" width="1" height="1" fill="#2c2c2c"/><rect x="341" y="891" width="1" height="1" fill="#2c2c2c"/><rect x="343" y="891" width="1" height="1" fill="#2c2c2c"/><path d="M1287.5 880.5l-5.5 4.3l5.5 4.3" fill="none" stroke="#fff" stroke-width="2"/><rect x="1298.5" y="874.5" width="9.5" height="15.5" fill="#6ab4e8"/><rect x="1300" y="877" width="5" height="4" fill="#3cc06c"/><rect x="1301" y="883" width="6" height="4" fill="#e8e8f4"/><ellipse cx="1303" cy="881" rx="7.5" ry="3.5" transform="rotate(-50 1303 881)" fill="none" stroke="#e88a20" stroke-width="1.4"/><rect x="1313.5" y="879" width="14.5" height="8.5" rx="1.5" fill="#d4d8e0"/><rect x="1315.5" y="877" width="11" height="3" rx="1" fill="#f4f4f8"/><path d="M1315 884h11.5" stroke="#70757c" stroke-width="1.5"/><rect x="1348.5" y="876.5" width="6.5" height="12.5" rx="1" fill="#90e090" stroke="#f4f4f4" stroke-width="1.3"/><rect x="1350" y="875" width="3.5" height="1.5" fill="#f4f4f4"/><path d="M1343.5 875v3M1346.5 875v3" stroke="#f0e8c0" stroke-width="1.2"/><path d="M1342.5 878h5.5v3.5q-2.7 2-5.5 0zM1345.2 883v6.5" fill="#f4f4f4" stroke="#f4f4f4" stroke-width="1.2"/><rect x="1364.5" y="876" width="9" height="7.5" fill="#2a62c8" stroke="#e8f0fc" stroke-width="1.2"/><rect x="1360" y="879.5" width="9" height="7.5" fill="#2a62c8" stroke="#e8f0fc" stroke-width="1.2"/><path d="M1362 889.5h5" stroke="#e8f0fc" stroke-width="1.3"/><circle cx="1369.5" cy="886.5" r="3.6" fill="#2a9a4a"/><path d="M1367 885.5q2.5-2 5 0.5" stroke="#3a7ae8" stroke-width="1.5" fill="none"/><path d="M1378 881.5h2.5l4.5-4.5v14l-4.5-4.5h-2.5z" fill="#f0f0f0"/><path d="M1387 881.5q1.5 2.5 0 5M1389.5 879q3 5 0 10" fill="none" stroke="#4cc060" stroke-width="1.2"/></svg>

</body></html>
